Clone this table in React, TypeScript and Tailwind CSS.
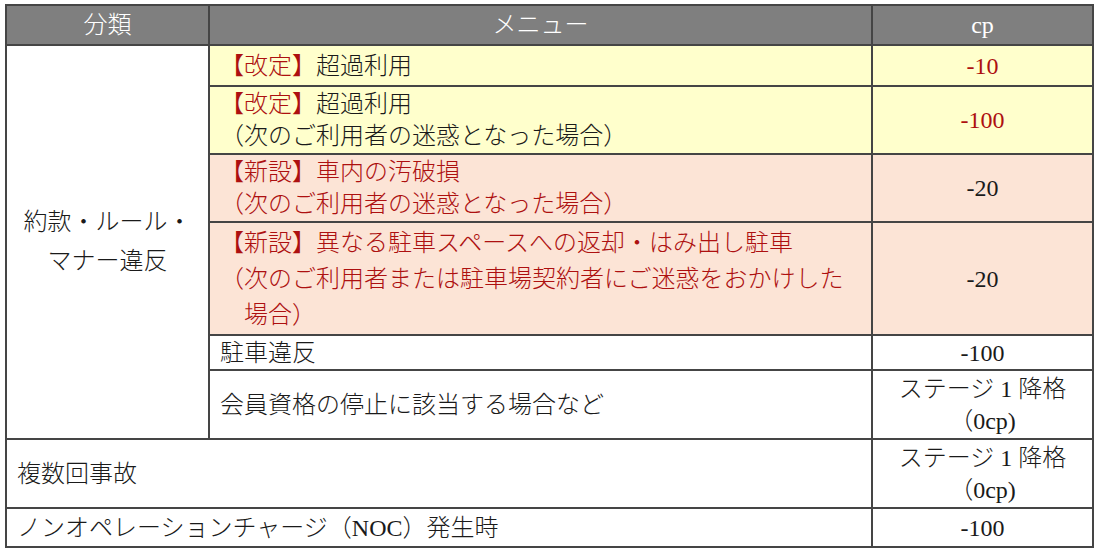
import React from 'react';

type Line = { red?: string; text?: string };

interface MenuRow {
  id: number;
  bg: string;
  height: string;
  leading: string;
  lines: Line[];
  cp: string[];
  cpRed?: boolean;
}

const RED = 'text-[#ad1010]';

const MENU_ROWS: MenuRow[] = [
  {
    id: 1,
    bg: 'bg-[#ffffcc]',
    height: 'h-[41px]',
    leading: 'leading-[32px]',
    lines: [{ red: '【改定】', text: '超過利用' }],
    cp: ['-10'],
    cpRed: true,
  },
  {
    id: 2,
    bg: 'bg-[#ffffcc]',
    height: 'h-[68px]',
    leading: 'leading-[32px]',
    lines: [{ red: '【改定】', text: '超過利用' }, { text: '（次のご利用者の迷惑となった場合）' }],
    cp: ['-100'],
    cpRed: true,
  },
  {
    id: 3,
    bg: 'bg-[#fce4d6]',
    height: 'h-[68px]',
    leading: 'leading-[32px]',
    lines: [{ red: '【新設】車内の汚破損' }, { red: '（次のご利用者の迷惑となった場合）' }],
    cp: ['-20'],
  },
  {
    id: 4,
    bg: 'bg-[#fce4d6]',
    height: 'h-[113px]',
    leading: 'leading-[36px]',
    lines: [
      { red: '【新設】異なる駐車スペースへの返却・はみ出し駐車' },
      { red: '（次のご利用者または駐車場契約者にご迷惑をおかけした' },
      { red: '\u3000場合）' },
    ],
    cp: ['-20'],
  },
  {
    id: 5,
    bg: 'bg-white',
    height: 'h-[35px]',
    leading: 'leading-[32px]',
    lines: [{ text: '駐車違反' }],
    cp: ['-100'],
  },
  {
    id: 6,
    bg: 'bg-white',
    height: 'h-[69px]',
    leading: 'leading-[32px]',
    lines: [{ text: '会員資格の停止に該当する場合など' }],
    cp: ['ステージ 1 降格', '（0cp)'],
  },
];

const cell = 'border-2 border-[#454545] p-0';

const MenuLines = ({ lines }: { lines: Line[] }) => (
  <>
    {lines.map((line, i) => (
      <div key={i} className="whitespace-nowrap">
        {line.red && <span className={RED}>{line.red}</span>}
        {line.text && <span>{line.text}</span>}
      </div>
    ))}
  </>
);

const CpCell = ({
  values,
  red,
  leading,
  bg = 'bg-white',
}: {
  values: string[];
  red?: boolean;
  leading: string;
  bg?: string;
}) => (
  <td className={`${cell} ${bg} text-center ${leading} ${red ? RED : ''}`}>
    {values.map((v) => (
      <div key={v}>{v}</div>
    ))}
  </td>
);

const App = () => {
  return (
    <div className="min-h-[553px] w-[1100px] bg-white pl-[5px] pt-[4px] font-['Liberation_Serif','Noto_Sans_CJK_JP',serif] text-[24px] font-light text-[#1a1a1a]">
      <table className="table-fixed border-collapse w-[1087px]">
        <colgroup>
          <col className="w-[203px]" />
          <col className="w-[663px]" />
          <col className="w-[221px]" />
        </colgroup>
        <thead>
          <tr className="h-[40px] bg-[#7f7f7f] text-white">
            <th className={`${cell} font-light`}>分類</th>
            <th className={`${cell} font-light`}>メニュー</th>
            <th className={`${cell} font-light`}>cp</th>
          </tr>
        </thead>
        <tbody>
          {MENU_ROWS.map((row, idx) => (
            <tr key={row.id} className={row.height}>
              {idx === 0 && (
                <td rowSpan={MENU_ROWS.length} className={`${cell} bg-white text-center leading-[39px]`}>
                  <div>約款・ルール・</div>
                  <div>マナー違反</div>
                </td>
              )}
              <td className={`${cell} ${row.bg} pl-[10px] ${row.leading}`}>
                <MenuLines lines={row.lines} />
              </td>
              <CpCell values={row.cp} red={row.cpRed} leading={row.leading} bg={row.bg} />
            </tr>
          ))}
          <tr className="h-[69px]">
            <td colSpan={2} className={`${cell} pl-[10px] leading-[32px]`}>
              複数回事故
            </td>
            <CpCell values={['ステージ 1 降格', '（0cp)']} leading="leading-[32px]" />
          </tr>
          <tr className="h-[39px]">
            <td colSpan={2} className={`${cell} pl-[10px] leading-[32px]`}>
              ノンオペレーションチャージ（NOC）発生時
            </td>
            <CpCell values={['-100']} leading="leading-[32px]" />
          </tr>
        </tbody>
      </table>
    </div>
  );
};

export default App;
